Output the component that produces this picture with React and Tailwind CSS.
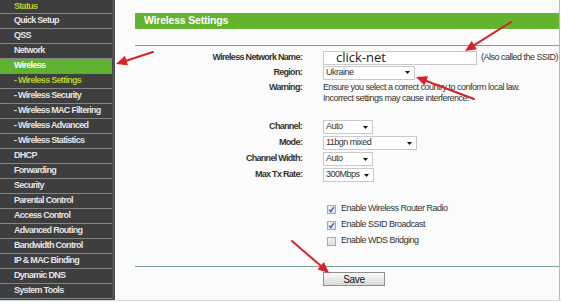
const NAV = [
  { label: 'Status', tone: 'lime', first: true },
  { label: 'Quick Setup' },
  { label: 'QSS' },
  { label: 'Network' },
  { label: 'Wireless', tone: 'active' },
  { label: '- Wireless Settings', tone: 'lime' },
  { label: '- Wireless Security' },
  { label: '- Wireless MAC Filtering' },
  { label: '- Wireless Advanced' },
  { label: '- Wireless Statistics' },
  { label: 'DHCP' },
  { label: 'Forwarding' },
  { label: 'Security' },
  { label: 'Parental Control' },
  { label: 'Access Control' },
  { label: 'Advanced Routing' },
  { label: 'Bandwidth Control' },
  { label: 'IP & MAC Binding' },
  { label: 'Dynamic DNS' },
  { label: 'System Tools' },
]

const RADIO = [
  { label: 'Channel:', value: 'Auto', w: 'w-[50px]' },
  { label: 'Mode:', value: '11bgn mixed', w: 'w-[94px]' },
  { label: 'Channel Width:', value: 'Auto', w: 'w-[50px]' },
  { label: 'Max Tx Rate:', value: '300Mbps', w: 'w-[51px]' },
]

const CHECKS = [
  { label: 'Enable Wireless Router Radio', on: true },
  { label: 'Enable SSID Broadcast', on: true },
  { label: 'Enable WDS Bridging', on: false },
]

// red annotation arrows drawn over the screenshot: [tailX, tailY, tipX, tipY]
const ARROWS = [
  [153, 52, 116, 64],
  [511, 22, 465, 51],
  [474, 99, 416, 77],
  [292, 241, 329, 273],
]

function Arrow({ a }) {
  const [x1, y1, x2, y2] = a
  const len = Math.hypot(x2 - x1, y2 - y1)
  const dx = (x2 - x1) / len
  const dy = (y2 - y1) / len
  const bx = x2 - dx * 11
  const by = y2 - dy * 11
  const pts = `${x2},${y2} ${bx - dy * 5},${by + dx * 5} ${bx + dy * 5},${by - dx * 5}`
  return (
    <g>
      <line x1={x1} y1={y1} x2={bx + dx * 2} y2={by + dy * 2} stroke="#d6222b" strokeWidth="2" strokeLinecap="round" />
      <polygon points={pts} fill="#d6222b" />
    </g>
  )
}

function Select({ value, w }) {
  return (
    <div className={`flex h-[14px] items-center justify-between border border-[#c9c9c9] bg-white pl-[2px] pr-[4px] ${w}`}>
      <span>{value}</span>
      <svg width="5" height="3" viewBox="0 0 5 3"><polygon points="0,0 5,0 2.5,3" fill="#111" /></svg>
    </div>
  )
}

function Row({ label, children, h = 'h-[16px]' }) {
  return (
    <div className={`flex items-center ${h}`}>
      <div className="w-[167px] text-right font-bold text-[#333] tracking-[-0.7px]">{label}</div>
      <div className="ml-[21px] flex items-center">{children}</div>
    </div>
  )
}

export default function App() {
  return (
    <div className="relative h-[303px] w-[561px] overflow-hidden bg-white font-['Liberation_Sans',Arial,sans-serif] text-[9px] tracking-[-0.5px] text-[#333]">
      <div className="flex h-[301px] border-b border-[#d3dbe3]">
        {/* Menu */}
        <div className="w-[115px] border-r-[3px] border-[#4f4f4f] bg-[#3e3e3e]">
          {NAV.map(n => (
            <div
              key={n.label}
              className={`flex items-center border-b border-[#858585] pl-[14px] font-bold tracking-[-0.7px] ${n.first ? 'h-[14px]' : 'h-[15px]'} ${
                n.tone === 'active' ? 'bg-[#5fb232] text-white' : n.tone === 'lime' ? 'text-[#b3d236]' : 'text-[#e4e4e4]'
              }`}
            >
              {n.label}
            </div>
          ))}
        </div>

        {/* Settings panel */}
        <div className="w-[445px] border-r border-[#b9b9b9] bg-[#fbfbfb] pl-[20px]">
          <div className="mt-[13px] flex h-[16px] items-center bg-[#63b32f] pl-[9px] text-[10.5px] font-bold tracking-[-0.2px] text-white">
            Wireless Settings
          </div>
          <div className="mt-[16px] h-px bg-[#7ea38d]" />

          <div className="mt-[4px]">
            <Row label="Wireless Network Name:" h="h-[15px]">
              <div className="flex h-[14px] w-[154px] items-center border border-[#c9c9c9] bg-white pl-[12px] font-['Open_Sans',sans-serif] text-[13px] tracking-normal text-[#222]">
                click-net
              </div>
              <span className="ml-[4px]">(Also called the SSID)</span>
            </Row>
            <Row label="Region:" h="h-[15px]">
              <Select value="Ukraine" w="w-[92px]" />
            </Row>
            <div className="mt-[2px] flex">
              <div className="w-[167px] text-right font-bold leading-[11px] tracking-[-0.7px]">Warning:</div>
              <div className="ml-[21px] leading-[11px]">
                Ensure you select a correct country to conform local law.
                <br />
                Incorrect settings may cause interference.
              </div>
            </div>
          </div>

          <div className="mt-[15px]">
            {RADIO.map(r => (
              <Row key={r.label} label={r.label}>
                <Select value={r.value} w={r.w} />
              </Row>
            ))}
          </div>

          <div className="mt-[18px] pl-[192px]">
            {CHECKS.map(c => (
              <div key={c.label} className="flex h-[16px] items-center gap-[5px]">
                <span className="flex h-[9px] w-[9px] items-center justify-center border border-[#a9a9a9] bg-gradient-to-b from-[#f0f0f0] to-[#dcdcdc]">
                  {c.on && (
                    <svg width="7" height="7" viewBox="0 0 7 7">
                      <path d="M1 3.6 L2.8 5.4 L6 1.2" fill="none" stroke="#2c5aa8" strokeWidth="1.3" />
                    </svg>
                  )}
                </span>
                {c.label}
              </div>
            ))}
          </div>

          <div className="mt-[17px] h-px bg-[#7ea38d]" />
          <div className="ml-[188px] mt-[5px] flex h-[14px] w-[62px] items-center justify-center border border-[#8e8e8e] bg-gradient-to-b from-[#fafafa] to-[#d9d9d9] text-[10px] tracking-[-0.3px] text-[#111]">
            Save
          </div>
        </div>
      </div>

      <svg className="pointer-events-none absolute inset-0" width="561" height="303">
        {ARROWS.map((a, i) => <Arrow key={i} a={a} />)}
      </svg>
    </div>
  )
}
